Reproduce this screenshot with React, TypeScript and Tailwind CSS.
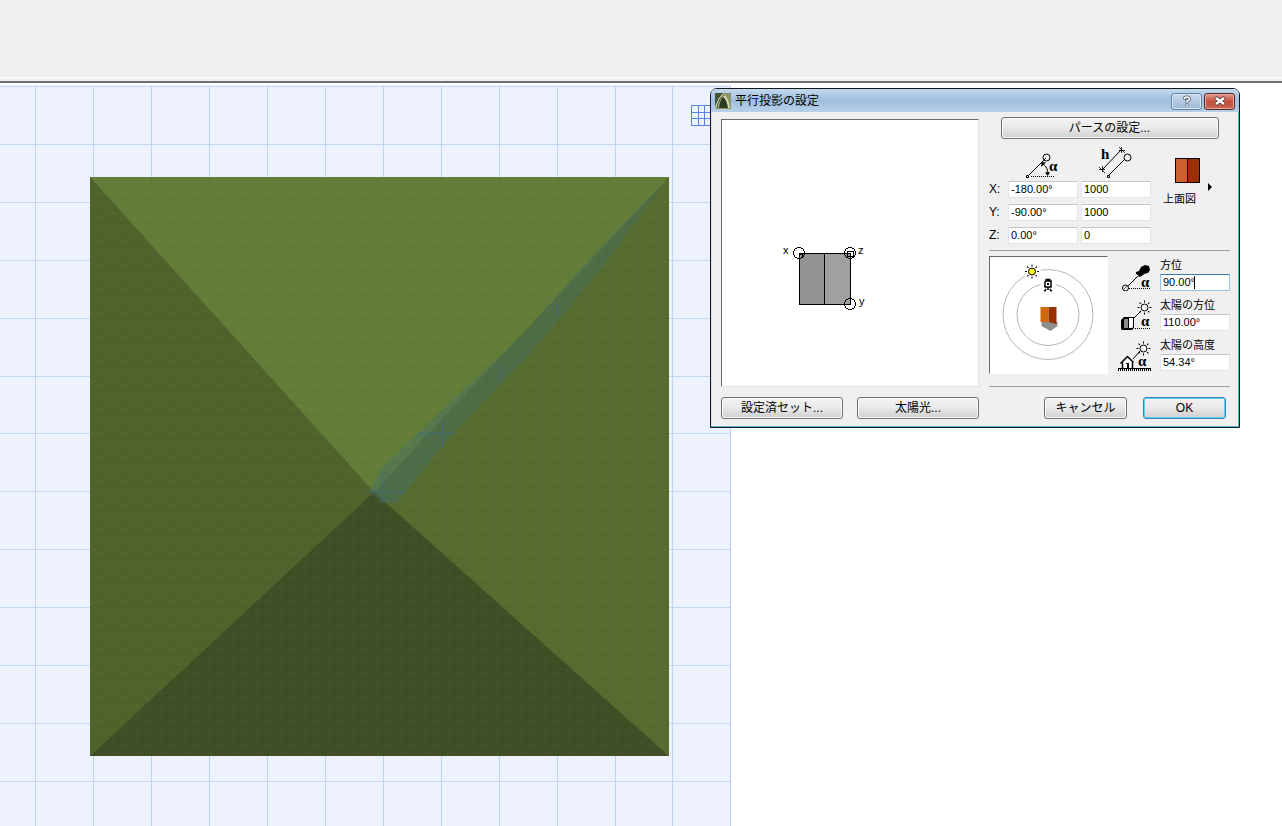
import React from 'react';
import clsx from 'clsx';

const COLUMNS = [35, 93, 151, 209, 267, 325, 383, 441, 499, 557, 615, 672, 730];
const ROWS = [86, 144, 202, 260, 318, 376, 433, 491, 549, 607, 665, 723, 781];

const AXES = [
  { axis: 'X', angle: '-180.00°', scale: '1000' },
  { axis: 'Y', angle: '-90.00°', scale: '1000' },
  { axis: 'Z', angle: '0.00°', scale: '0' },
];

const RAYS = [0, 45, 90, 135, 180, 225, 270, 315];

const Terrain: React.FC = () => (
  <svg className="absolute left-0 top-0 h-[743px] w-[731px]" viewBox="0 83 731 743" shapeRendering="crispEdges">
    <defs>
      <pattern id="weave" width="24" height="12" patternUnits="userSpaceOnUse">
        <path d="M0 9l3-4 3 4 3-4 3 4M12 4l3 4 3-4 3 4 3-4" fill="none" stroke="#1d3010" strokeOpacity=".06" />
        <path d="M0 3l3-2 3 2M14 11l3-2 3 2" fill="none" stroke="#a09a50" strokeOpacity=".08" />
        <path d="M6 0v12M18 0v12" stroke="#3f6a20" strokeOpacity=".06" strokeWidth="5" />
      </pattern>
      <linearGradient id="stripe" gradientUnits="userSpaceOnUse" x1="375" y1="495" x2="669" y2="178">
        <stop offset="0" stopColor="#3f6f70" stopOpacity=".38" />
        <stop offset="1" stopColor="#3f6f70" stopOpacity=".32" />
      </linearGradient>
    </defs>
    <rect x="0" y="85" width="731" height="741" fill="#eef2ff" />
    {ROWS.map((y) => (
      <rect key={y} x="0" y={y} width="731" height="1" fill="#c5d8f3" />
    ))}
    {COLUMNS.map((x) => (
      <rect key={x} x={x} y="86" width="1" height="740" fill="#bdd4f1" />
    ))}
    <path d="M691.500 105.500h22v20h-22zM698.500 105v21M704.500 105v21M691 112.500h22M691 118.500h22" fill="#edf2ff" stroke="#5a82e6" />
    <g shapeRendering="auto">
      <rect x="90" y="177" width="579" height="579" fill="#647e3a" />
      <path d="M90 177L374 492L90 756z" fill="#50632c" />
      <path d="M669 177L374 492L669 756z" fill="#576c30" />
      <path d="M90 756L374 492L669 756z" fill="#404e25" />
      <rect x="90" y="177" width="579" height="579" fill="url(#weave)" />
      <path d="M669 177L602 245L522 335L442 410L380 470L370 492L382 503L397 503L452 434L530 354L602 268z" fill="url(#stripe)" />
      <path d="M418 433.500h38M442.500 418v30M383.500 472v30M366 491.500h40M499.500 365v17M557.500 303v14" stroke="#3a6590" strokeOpacity=".35" strokeWidth="2" />
    </g>
  </svg>
);

const Preview: React.FC = () => (
  <svg className="block h-full w-full" viewBox="0 0 256 266" shapeRendering="crispEdges">
    <path d="M77.500 133.500h25v51h-25z" fill="#939393" stroke="#000" />
    <path d="M102.500 133.500h26v51h-26z" fill="#a0a0a0" stroke="#000" />
    <g fill="none" stroke="#000">
      <circle cx="77" cy="133" r="5.500" />
      <circle cx="128" cy="133" r="5.500" />
      <circle cx="128" cy="184" r="5.500" />
      <path d="M125.500 131.500h6v5h-6zM77 134h3v3" />
    </g>
    <g fontFamily="Liberation Sans, sans-serif" fontSize="11">
      <text x="61" y="134">x</text>
      <text x="136" y="134">z</text>
      <text x="137" y="185">y</text>
    </g>
  </svg>
);

const Alpha: React.FC<{ x: number; y: number }> = ({ x, y }) => (
  <text x={x} y={y} fontFamily="Liberation Serif, serif" fontWeight="700" fontSize="15">
    α
  </text>
);

const Sun: React.FC<{ x: number; y: number; fill?: string }> = ({ x, y, fill = 'none' }) => (
  <g transform={`translate(${x} ${y})`} stroke="#000">
    <circle r="3.500" fill={fill} />
    {RAYS.map((angle) => (
      <path key={angle} d="M0-5v-2" transform={`rotate(${angle})`} />
    ))}
  </g>
);

const AngleIcon: React.FC = () => (
  <svg className="h-8 w-[34px]" viewBox="0 0 34 32" fill="none" stroke="#000">
    <path d="M3 28L20 11" />
    <path d="M.500 28.500h2v2h-2z" fill="#fff" />
    <circle cx="20.500" cy="10.500" r="3.500" />
    <path d="M5 29.500h24" strokeDasharray="1 1" />
    <path d="M17 17q5 3 5 11" />
    <path d="M15.500 15.500h4l-4 4zM19.500 25.500h4l-2 3z" fill="#000" strokeWidth=".5" />
    <g fill="#000" stroke="none">
      <Alpha x={23} y={24} />
    </g>
  </svg>
);

const LengthIcon: React.FC = () => (
  <svg className="h-8 w-[34px]" viewBox="0 0 34 32" fill="none" stroke="#000">
    <path d="M3.500 22.500L22.500 2.500M10 28L26 12" />
    <path d="M20 0l6 6M22.500 0v6M20 3.500h6M0 20l6 6M3.500 19v6M0 22.500h6" strokeWidth=".8" />
    <path d="M8.500 28.500h2v2h-2z" fill="#fff" />
    <circle cx="28.500" cy="10.500" r="3.500" />
    <text x="2" y="12" fontFamily="Liberation Serif, serif" fontWeight="700" fontSize="15" fill="#000" stroke="none">
      h
    </text>
  </svg>
);

const AzimuthIcon: React.FC = () => (
  <svg className="h-[33px] w-[34px] shrink-0" viewBox="0 0 34 33">
    <path d="M10 28L20 18" stroke="#000" />
    <circle cx="7.500" cy="30" r="3" fill="none" stroke="#000" />
    <path d="M6 31l3-3" stroke="#000" strokeWidth=".7" />
    <path d="M11 30.500h22" stroke="#000" strokeDasharray="1 1" />
    <path d="M18 14l3-1 2-4 4-2 4 1 1 4-2 3-4 1-2 2-3 1-1-2-2-1z" />
    <Alpha x={23} y={29} />
  </svg>
);

const SunAzimuthIcon: React.FC = () => (
  <svg className="h-[33px] w-[34px] shrink-0" viewBox="0 0 34 33">
    <path d="M16 20l7-7" stroke="#000" />
    <Sun x={26.500} y={9.500} />
    <path d="M3 22l3-3h10v11l-2 2H4l-1-1z" />
    <path d="M6 21h4v9H6z" fill="#8b8b8b" />
    <path d="M11 20h4v9l-1 1h-3z" fill="#fff" />
    <path d="M17 30.500h16" stroke="#000" strokeDasharray="1 1" />
    <Alpha x={23} y={28} />
  </svg>
);

const SunAltitudeIcon: React.FC = () => (
  <svg className="h-[33px] w-[34px] shrink-0" viewBox="0 0 34 33">
    <path d="M15 21l7-8" stroke="#000" />
    <Sun x={25.500} y={10.500} />
    <path d="M5 24l5-4 4 4v6H5z" fill="#fff" />
    <path d="M2.500 25.500l7-7 6 6M4.500 24v6M14.500 24v6" fill="none" stroke="#000" strokeWidth="1.500" />
    <path d="M8 25h3v5H9v-4H8z" />
    <path d="M0 30.500h33" stroke="#000" />
    <path d="M0 32h33" stroke="#000" strokeWidth="2" strokeDasharray="1 1" />
    <Alpha x={20} y={28} />
  </svg>
);

const Compass: React.FC = () => (
  <svg className="block h-full w-full" viewBox="0 0 116 116">
    <circle cx="57.500" cy="57.500" r="45" fill="none" stroke="#b5b5b5" />
    <circle cx="57.500" cy="57.500" r="31" fill="none" stroke="#b5b5b5" />
    <circle cx="41.500" cy="14.500" r="9" fill="#fff" />
    <rect x="50" y="19" width="15" height="16" fill="#fff" />
    <Sun x={41.500} y={14.500} fill="#f7f51c" />
    <path d="M55 22.500h5M54.500 24v6h6v-6h-6M55.500 32l-1.500 2.500M59.500 32l1.500 2.500M57.500 30v3" fill="none" stroke="#000" strokeWidth="1.500" />
    <path d="M56.500 27h2" stroke="#000" strokeWidth="2" />
    <path d="M51 65h16v4l-7 5-9-5z" fill="#8d8d8d" />
    <path d="M50 50h8v15h-8z" fill="#d0680e" />
    <path d="M58 50h8v17l-8-2z" fill="#983000" />
  </svg>
);

const PushButton: React.FC<{ label: string; className: string; primary?: boolean }> = ({ label, className, primary }) => (
  <button
    type="button"
    className={clsx(
      'flex h-[22px] items-center justify-center rounded-[3px] border bg-gradient-to-b from-[#f3f3f3] via-[#e9e9e9] to-[#cfcfcf] text-xs whitespace-nowrap',
      primary ? 'border-[#3c7fb1] shadow-[inset_0_0_0_1px_#5fd0ee]' : 'border-[#707070] shadow-[inset_0_0_0_1px_#fafafa]',
      className,
    )}
  >
    {label}
  </button>
);

const fieldClass =
  'block h-[17px] w-[70px] rounded-[1px] border bg-white px-[2px] pb-[2px] text-[11px] leading-[13px] outline-none';
const idleBorder = 'border-[#e1e4e8] border-t-[#c4c6ca]';

interface AngleFieldProps {
  id: string;
  label: string;
  value: string;
  icon: React.ReactNode;
  focused?: boolean;
}

const AngleField: React.FC<AngleFieldProps> = ({ id, label, value, icon, focused }) => (
  <div className="flex h-[33px] gap-2">
    {icon}
    <div className="flex flex-col justify-between">
      <label htmlFor={id} className="block text-[11px] leading-[14px] whitespace-nowrap">
        {label}
      </label>
      <div className="relative">
        <input
          id={id}
          defaultValue={value}
          className={clsx(fieldClass, focused ? 'border-[#9cc3e4] border-t-[#3d7bad]' : idleBorder)}
        />
        {focused && <span className="absolute left-[34px] top-[2px] h-[13px] w-px bg-black" />}
      </div>
    </div>
  </div>
);

const TitleBar: React.FC = () => (
  <div className="flex h-[23px] items-center rounded-t-[5px] bg-gradient-to-b from-[#c3d8ec] via-[#a0bfdf] to-[#b7cfe7] pl-1 pr-1 pt-px">
    <svg className="mr-1 h-4 w-4" viewBox="0 0 16 16">
      <rect width="16" height="16" fill="#8a9569" />
      <path d="M0 0h8L4 6 0 14z" fill="#46553a" />
      <path d="M0 15Q3 4 8 1q5 2 7 14h-3Q10 5 8 4 5 6 3 15z" fill="#d3dbaa" />
      <path d="M4 15Q5 7 8 4q4 3 5 11z" fill="#2b3b22" />
      <path d="M2 15Q4 5 9 2" fill="none" stroke="#2b3b22" />
    </svg>
    <h1 className="flex-1 text-xs">平行投影の設定</h1>
    <div className="flex gap-[2px]">
      <button type="button" aria-label="Help" className="flex h-[17px] w-[31px] items-center justify-center rounded-[3px] border border-[#6882a0] bg-gradient-to-b from-[#c6d9eb] to-[#9fbad6] shadow-[inset_0_0_0_1px_#d8e6f3]">
        <svg className="h-3 w-3" viewBox="0 0 12 12" fill="none">
          <path d="M3.500 4.500V3.500q0-1.500 2.500-1.500t2.500 2Q8.500 5.500 6 6v1.500M6 8.500v2" stroke="#4b5560" strokeWidth="3" />
          <path d="M3.500 4V3.500q0-1.500 2.500-1.500t2.500 2Q8.500 5.500 6 6v1.500M6 9v1.500" stroke="#fff" strokeWidth="1.500" />
        </svg>
      </button>
      <button type="button" aria-label="Close" className="flex h-[17px] w-[31px] items-center justify-center rounded-[3px] border border-[#5a2429] bg-gradient-to-b from-[#dc9a8d] via-[#c4503c] to-[#c9654f] shadow-[inset_0_0_0_1px_#e4ada2]">
        <svg className="h-3 w-3" viewBox="0 0 12 12">
          <path d="M1.500 2.500l9 7M10.500 2.500l-9 7" stroke="#5c4048" strokeWidth="4" />
          <path d="M2 3l8 6M10 3l-8 6" stroke="#fff" strokeWidth="2.200" />
        </svg>
      </button>
    </div>
  </div>
);

const ProjectionTable: React.FC = () => (
  <div className="mt-2 flex">
    <div className="grid grid-cols-[16px_70px_70px] gap-x-[3px] gap-y-[6px]">
      <span />
      <div className="-mb-1 flex justify-center">
        <AngleIcon />
      </div>
      <div className="-mb-1 flex justify-center">
        <LengthIcon />
      </div>
      {AXES.map(({ axis, angle, scale }) => (
        <React.Fragment key={axis}>
          <label htmlFor={`angle-${axis}`} className="text-xs leading-[17px]">
            {axis}:
          </label>
          <input id={`angle-${axis}`} defaultValue={angle} className={clsx(fieldClass, idleBorder)} />
          <input aria-label={`${axis} scale`} defaultValue={scale} className={clsx(fieldClass, idleBorder)} />
        </React.Fragment>
      ))}
    </div>
    <button type="button" className="ml-3 mt-[11px] flex h-12 flex-col text-left">
      <span className="flex items-end">
        <svg className="ml-3 h-[25px] w-[25px]" viewBox="0 0 25 25" shapeRendering="crispEdges">
          <path d="M.500.500h12v24H.500z" fill="#cd6230" stroke="#000" />
          <path d="M12.500.500h12v24h-12z" fill="#9a3003" stroke="#000" />
        </svg>
        <svg className="-mb-2 ml-2 h-2 w-1" viewBox="0 0 4 8">
          <path d="M0 0l4 4-4 4z" />
        </svg>
      </span>
      <span className="mt-2 text-[11px] leading-4">上面図</span>
    </button>
  </div>
);

const ProjectionDialog: React.FC = () => (
  <section className="absolute left-[710px] top-[88px] w-[530px] rounded-t-[7px] border border-[#10181c] bg-[#f0f0f0] shadow-[inset_-1px_-1px_0_#5cb8c8,inset_1px_0_0_#d5e2ea]">
    <TitleBar />
    <div className="flex items-end gap-[10px] px-[10px] pt-[5px]">
      <div className="h-[268px] w-[258px] shrink-0 border border-[#e3e3e3] border-l-[#696969] border-t-[#696969] bg-white">
        <Preview />
      </div>
      <div className="flex-1">
        <PushButton label="パースの設定..." className="mx-auto w-[218px]" />
        <ProjectionTable />
        <hr className="mt-[6px] border-[#a0a0a0]" />
        <div className="mt-[5px] flex">
          <div className="mb-3 h-[118px] w-[119px] border border-[#fff] border-l-[#696969] border-t-[#696969] bg-white">
            <Compass />
          </div>
          <div className="ml-[10px] mt-[2px] flex flex-col gap-[7px]">
            <AngleField id="azimuth" label="方位" value="90.00°" icon={<AzimuthIcon />} focused />
            <AngleField id="sun-azimuth" label="太陽の方位" value="110.00°" icon={<SunAzimuthIcon />} />
            <AngleField id="sun-altitude" label="太陽の高度" value="54.34°" icon={<SunAltitudeIcon />} />
          </div>
        </div>
        <hr className="border-[#a0a0a0]" />
      </div>
    </div>
    <div className="flex pb-2 pl-[10px] pr-[9px] pt-[10px]">
      <PushButton label="設定済セット..." className="w-[122px]" />
      <PushButton label="太陽光..." className="ml-[14px] w-[122px]" />
      <PushButton label="キャンセル" className="ml-auto w-[83px]" />
      <PushButton label="OK" primary className="ml-4 mr-1 w-[83px]" />
    </div>
  </section>
);

const App: React.FC = () => (
  <div className="relative flex min-h-screen flex-col overflow-hidden bg-white font-['Liberation_Sans','Noto_Sans_CJK_JP',sans-serif] text-black">
    <header className="h-[83px] border-b-2 border-[#707070] bg-[#f0f0f0] pt-[77px]">
      <div className="h-px bg-white" />
    </header>
    <main className="relative flex-1">
      <Terrain />
    </main>
    <ProjectionDialog />
  </div>
);

export default App;
